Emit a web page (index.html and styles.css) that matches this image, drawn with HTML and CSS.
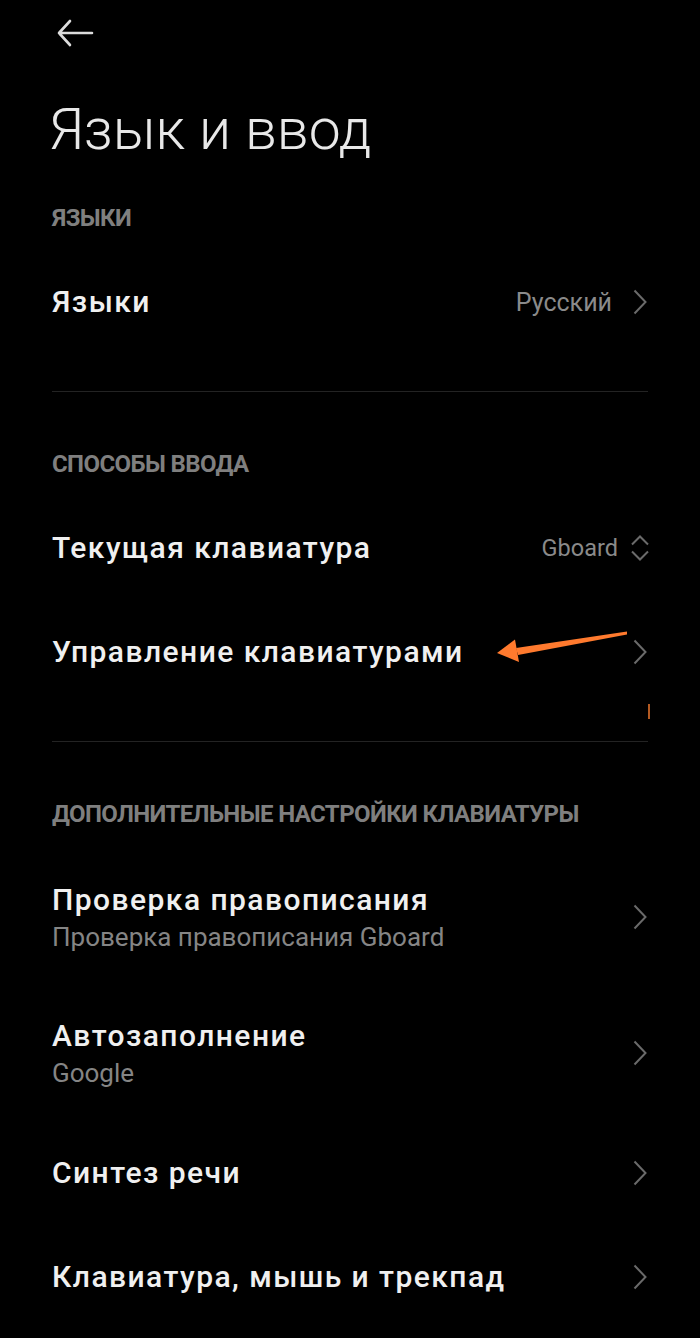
FILE: index.html
```html
<!DOCTYPE html>
<html lang="ru">
<head>
<meta charset="utf-8">
<title>Язык и ввод</title>
<link rel="stylesheet" href="styles.css">
</head>
<body>
<div class="page">
  <header class="appbar">
    <svg class="back" width="38" height="28" viewBox="0 0 38 28">
      <path d="M36 14H3M14 2L3 14l11 12" fill="none" stroke="#dcdcdc" stroke-width="2.6" stroke-linecap="round" stroke-linejoin="round"/>
    </svg>
  </header>
  <h1 class="title">Язык и ввод</h1>

  <section class="section first">
    <div class="sec-head">ЯЗЫКИ</div>
    <div class="row">
      <div class="row-text"><div class="row-title">Языки</div></div>
      <div class="row-value">Русский</div>
      <svg class="chev" width="14" height="26" viewBox="0 0 14 26"><path d="M1.5 1.5L12.5 13 1.5 24.5" fill="none" stroke="#6a6a6a" stroke-width="2"/></svg>
    </div>
    <div class="divider"></div>
  </section>

  <section class="section">
    <div class="sec-head">СПОСОБЫ ВВОДА</div>
    <div class="row">
      <div class="row-text"><div class="row-title">Текущая клавиатура</div></div>
      <div class="row-value gb">Gboard</div>
      <svg class="updown" width="20" height="28" viewBox="0 0 20 28"><path d="M2 10.5L10 2.5l8 8M2 17.5l8 8 8-8" fill="none" stroke="#6a6a6a" stroke-width="2"/></svg>
    </div>
    <div class="row">
      <div class="row-text"><div class="row-title">Управление клавиатурами</div></div>
      <svg class="chev" width="14" height="26" viewBox="0 0 14 26"><path d="M1.5 1.5L12.5 13 1.5 24.5" fill="none" stroke="#6a6a6a" stroke-width="2"/></svg>
    </div>
    <div class="divider"></div>
  </section>

  <section class="section last">
    <div class="sec-head">ДОПОЛНИТЕЛЬНЫЕ НАСТРОЙКИ КЛАВИАТУРЫ</div>
    <div class="row tall">
      <div class="row-text">
        <div class="row-title">Проверка правописания</div>
        <div class="row-sub">Проверка правописания Gboard</div>
      </div>
      <svg class="chev" width="14" height="26" viewBox="0 0 14 26"><path d="M1.5 1.5L12.5 13 1.5 24.5" fill="none" stroke="#6a6a6a" stroke-width="2"/></svg>
    </div>
    <div class="row tall">
      <div class="row-text">
        <div class="row-title">Автозаполнение</div>
        <div class="row-sub">Google</div>
      </div>
      <svg class="chev" width="14" height="26" viewBox="0 0 14 26"><path d="M1.5 1.5L12.5 13 1.5 24.5" fill="none" stroke="#6a6a6a" stroke-width="2"/></svg>
    </div>
    <div class="row">
      <div class="row-text"><div class="row-title">Синтез речи</div></div>
      <svg class="chev" width="14" height="26" viewBox="0 0 14 26"><path d="M1.5 1.5L12.5 13 1.5 24.5" fill="none" stroke="#6a6a6a" stroke-width="2"/></svg>
    </div>
    <div class="row">
      <div class="row-text"><div class="row-title">Клавиатура, мышь и трекпад</div></div>
      <svg class="chev" width="14" height="26" viewBox="0 0 14 26"><path d="M1.5 1.5L12.5 13 1.5 24.5" fill="none" stroke="#6a6a6a" stroke-width="2"/></svg>
    </div>
  </section>

  <svg class="annot" width="700" height="760" viewBox="0 0 700 760">
    <path d="M627 631.5 L516 648 L518 655 L627 634.5 Z" fill="#ff7a2e"/>
    <path d="M497 653 L515 639.5 L519 662 Z" fill="#ff7a2e"/>
    <path d="M649 704 L649 719" stroke="#e0702a" stroke-width="1.6"/>
  </svg>
</div>
</body>
</html>
```

FILE: styles.css
```css
* { box-sizing: border-box; }
html, body { margin: 0; padding: 0; background: #000; }
body {
  font-family: Roboto, "Noto Sans", "DejaVu Sans", sans-serif;
  color: #eeeeee;
  width: 700px;
  height: 1338px;
  overflow: hidden;
}
.page { position: relative; width: 700px; height: 1338px; }
.appbar {
  height: 66px;
  display: flex;
  align-items: center;
  padding-left: 56px;
}
.back { display: block; }
.title {
  margin: 24px 0 0 0;
  padding-left: 49px;
  height: 80px;
  line-height: 80px;
  font-size: 57px;
  font-weight: 300;
  color: #e8e8e8;
  letter-spacing: 0;
}
.section { padding: 0 52px; }
.section.first { padding-top: 33px; }
.section:not(.first) { padding-top: 57px; }
.sec-head {
  height: 30px;
  line-height: 30px;
  font-size: 24px;
  font-weight: 700;
  color: #7f7f7f;
  letter-spacing: -0.6px;
  margin-bottom: 17px;
}
.section.last .sec-head { margin-bottom: 20px; }
.row {
  height: 104px;
  display: flex;
  align-items: center;
}
.row.tall { height: 136px; }
.row-text { flex: 1; min-width: 0; }
.row-title {
  font-size: 30px;
  font-weight: 500;
  line-height: 36px;
  letter-spacing: 1.45px;
  color: #f0f0f0;
}
.row-sub {
  font-size: 26px;
  line-height: 32px;
  color: #858585;
  margin-top: 3px;
}
.row-value {
  font-size: 25px;
  color: #8a8a8a;
  margin-right: 21px;
}
.row-value.gb { margin-right: 12px; font-size: 23.5px; }
.chev { display: block; margin-right: 1px; }
.updown { display: block; margin-right: -2px; }
.divider {
  height: 1px;
  background: #232323;
  margin-top: 37px;
}
.annot { position: absolute; left: 0; top: 0; pointer-events: none; }
```
